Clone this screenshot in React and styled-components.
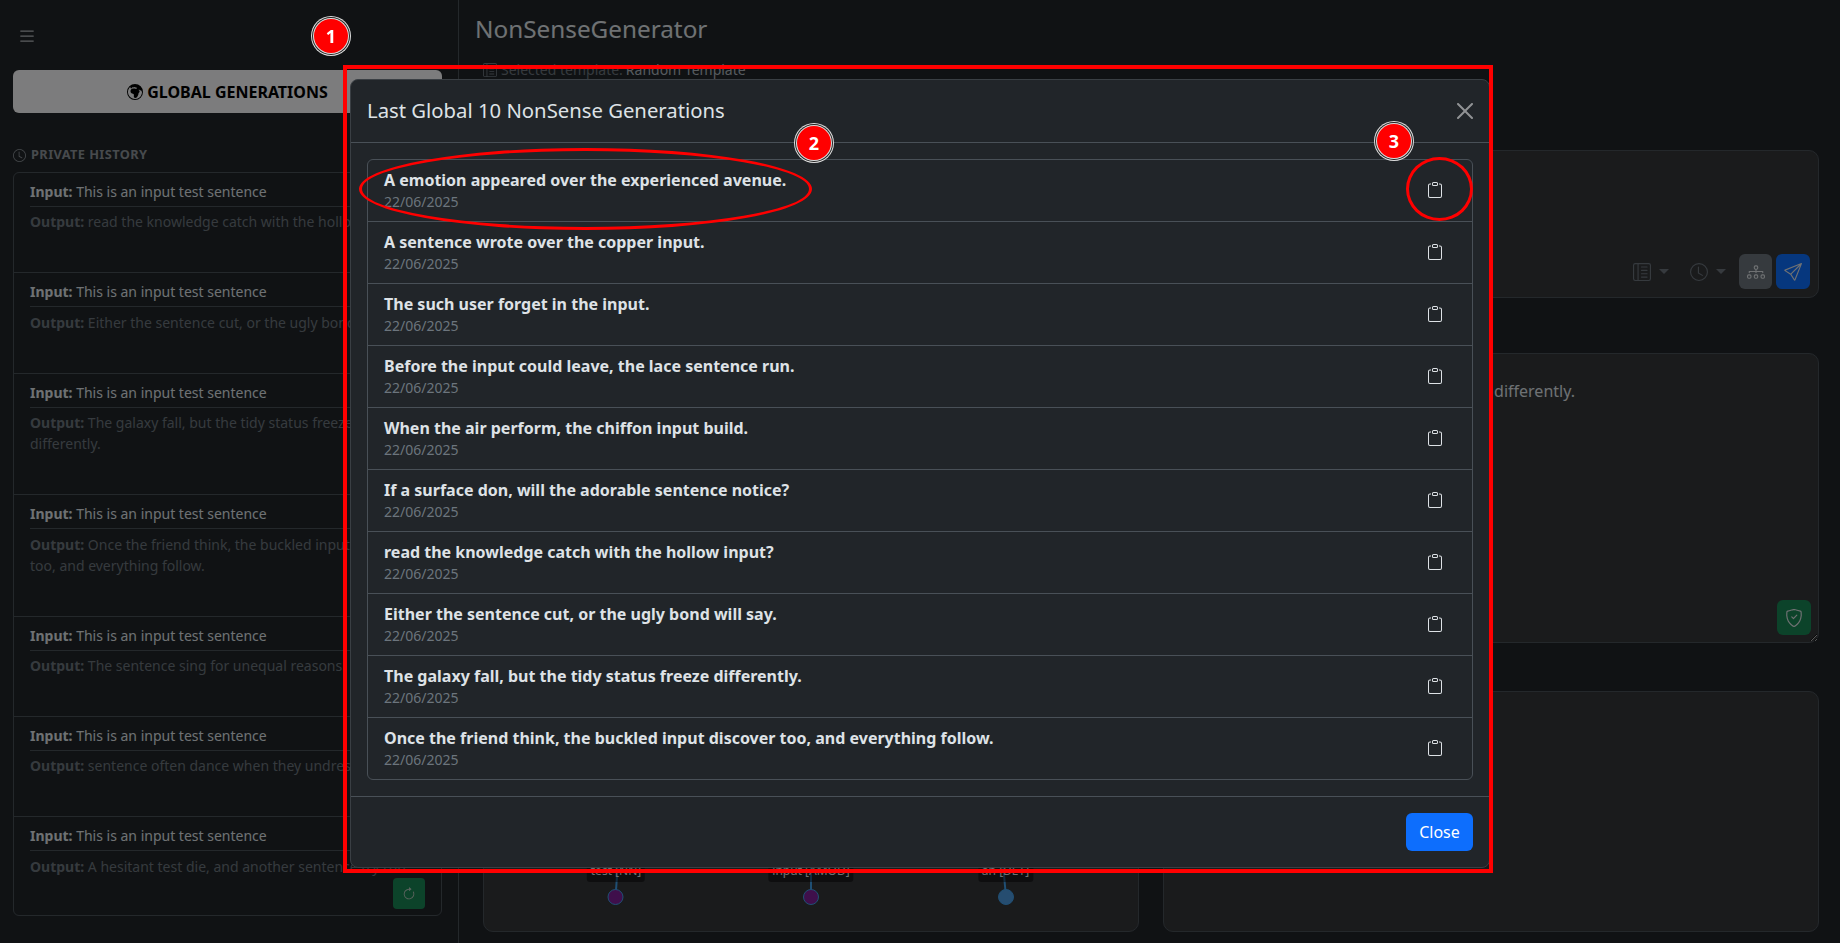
import React from "react";
import styled, { createGlobalStyle } from "styled-components";
import {
  BsList,
  BsGlobeEuropeAfrica,
  BsClock,
  BsClipboard,
  BsLayoutTextSidebarReverse,
  BsDiagram3,
  BsSend,
  BsShieldCheck,
  BsArrowClockwise,
} from "react-icons/bs";

const history = [
  "read the knowledge catch with the hollow input?",
  "Either the sentence cut, or the ugly bond will say.",
  "The galaxy fall, but the tidy status freeze differently.",
  "Once the friend think, the buckled input discover too, and everything follow.",
  "The sentence sing for unequal reasons.",
  "sentence often dance when they undress.",
  "A hesitant test die, and another sentence try run.",
];

const generations = [
  "A emotion appeared over the experienced avenue.",
  "A sentence wrote over the copper input.",
  "The such user forget in the input.",
  "Before the input could leave, the lace sentence run.",
  "When the air perform, the chiffon input build.",
  "If a surface don, will the adorable sentence notice?",
  "read the knowledge catch with the hollow input?",
  "Either the sentence cut, or the ugly bond will say.",
  "The galaxy fall, but the tidy status freeze differently.",
  "Once the friend think, the buckled input discover too, and everything follow.",
];

const nodes = [
  { label: "test [NN]", x: 131.5, lx: 132, tilt: 4, fill: "#7f1f96" },
  { label: "input [AMOD]", x: 327, lx: 327, tilt: 0, fill: "#7f1f96" },
  { label: "an [DET]", x: 522, lx: 521.5, tilt: -5, fill: "#4c9be0" },
];

const App = () => {
  return (
    <>
      <GlobalStyle />
      <Page>
        <Sidebar>
          <MenuButton>
            <BsList size={20} />
          </MenuButton>
          <GlobalButton>
            <BsGlobeEuropeAfrica size={16} />
            GLOBAL GENERATIONS
          </GlobalButton>
          <HistoryTitle>
            <BsClock size={13} />
            PRIVATE HISTORY
          </HistoryTitle>
          <HistoryList>
            {history.map((text) => (
              <HistoryItem key={text}>
                <InputLine>
                  <b>Input:</b> This is an input test sentence
                </InputLine>
                <Rule />
                <OutputLine>
                  <b>Output:</b> {text}
                </OutputLine>
              </HistoryItem>
            ))}
            <RefreshButton>
              <BsArrowClockwise size={14} />
            </RefreshButton>
          </HistoryList>
        </Sidebar>

        <Main>
          <Title>NonSenseGenerator</Title>
          <TemplateLine>
            <BsLayoutTextSidebarReverse size={14} />
            <span>Selected template:</span>
            <em>Random Template</em>
          </TemplateLine>

          <InputPanel>
            <Tools>
              <ToolDrop>
                <BsLayoutTextSidebarReverse size={18} />
                <Caret />
              </ToolDrop>
              <ToolDrop>
                <BsClock size={18} />
                <Caret />
              </ToolDrop>
              <ActionButton $color="#6c757d" $w={33}>
                <BsDiagram3 size={18} />
              </ActionButton>
              <ActionButton $color="#0d6efd" $w={34}>
                <BsSend size={18} />
              </ActionButton>
            </Tools>
          </InputPanel>

          <OutputPanel>
            <OutputText readOnly value="The galaxy fall, but the tidy status freeze differently." />
            <ShieldButton>
              <BsShieldCheck size={18} />
            </ShieldButton>
          </OutputPanel>

          <BottomRow>
            <GraphPanel>
              <GraphLines width="654" height="239">
                {nodes.map((n) => (
                  <g key={n.label}>
                    <line x1={n.x} y1="205" x2={n.x + n.tilt} y2="150" stroke="#3f9ee8" strokeWidth="2" />
                    <circle cx={n.x} cy="205" r="7.5" fill={n.fill} stroke="#3f9ee8" strokeWidth="1" />
                  </g>
                ))}
              </GraphLines>
              {nodes.map((n) => (
                <NodeLabel key={n.label} $x={n.lx}>
                  {n.label}
                </NodeLabel>
              ))}
            </GraphPanel>
            <TreePanel />
          </BottomRow>
        </Main>

        <Backdrop />

        <ModalWrap>
          <Modal>
            <ModalHeader>
              <ModalTitle>Last Global 10 NonSense Generations</ModalTitle>
              <CloseIcon viewBox="0 0 16 16">
                <path
                  fill="#fff"
                  d="M.293.293a1 1 0 0 1 1.414 0L8 6.586 14.293.293a1 1 0 1 1 1.414 1.414L9.414 8l6.293 6.293a1 1 0 0 1-1.414 1.414L8 9.414l-6.293 6.293a1 1 0 0 1-1.414-1.414L6.586 8 .293 1.707a1 1 0 0 1 0-1.414"
                />
              </CloseIcon>
            </ModalHeader>
            <ModalBody>
              <GenList>
                {generations.map((text) => (
                  <GenItem key={text}>
                    <div>
                      <GenText>{text}</GenText>
                      <GenDate>22/06/2025</GenDate>
                    </div>
                    <CopyButton>
                      <BsClipboard size={16} />
                    </CopyButton>
                  </GenItem>
                ))}
              </GenList>
            </ModalBody>
            <ModalFooter>
              <CloseButton>Close</CloseButton>
            </ModalFooter>
          </Modal>
        </ModalWrap>

        <RedBox />
        <RedRing $x={359} $y={148} $w={453} $h={82} />
        <RedRing $x={1406} $y={157} $w={67} $h={64} />
        <Badge $x={331} $y={36}>1</Badge>
        <Badge $x={814} $y={143}>2</Badge>
        <Badge $x={1394} $y={141}>3</Badge>
      </Page>
    </>
  );
};

export default App;

const GlobalStyle = createGlobalStyle`
  html, body {
    margin: 0;
    padding: 0;
    height: 100%;
    background: #212529;
    overflow: hidden;
  }
  * {
    box-sizing: border-box;
  }
  body {
    font-family: "Noto Sans", "Liberation Sans", sans-serif;
    font-size: 16px;
    line-height: 1.5;
    color: #dee2e6;
  }
`;

const Page = styled.div`
  display: flex;
  width: 1840px;
  height: 943px;
  overflow: hidden;
  background: #212529;
`;

const Sidebar = styled.aside`
  flex: 0 0 459px;
  height: 100%;
  padding: 0 16px 0 13px;
  border-right: 1px solid #495057;
`;

const MenuButton = styled.div`
  display: flex;
  align-items: center;
  height: 70px;
  padding: 2px 0 0 4px;
  color: #dee2e6;
  opacity: 0.8;
`;

const GlobalButton = styled.div`
  display: flex;
  align-items: center;
  justify-content: center;
  gap: 4px;
  width: 429px;
  height: 43px;
  border-radius: 6px;
  background: #f8f9fa;
  color: #000;
  font-weight: 700;
  font-size: 16px;
`;

const HistoryTitle = styled.div`
  display: flex;
  align-items: center;
  gap: 5px;
  margin-top: 32px;
  height: 20px;
  font-size: 12.8px;
  font-weight: 700;
  letter-spacing: 0.4px;
  color: #8f959b;
`;

const HistoryList = styled.div`
  position: relative;
  width: 429px;
  height: 744px;
  margin-top: 7px;
  overflow: hidden;
  border: 1px solid #495057;
  border-radius: 6px;
`;

const HistoryItem = styled.div`
  padding: 8px 16px 40px;
  border-bottom: 1px solid #495057;
  font-size: 14px;
  line-height: 21px;
`;

const InputLine = styled.div`
  color: #dee2e6;
  b {
    font-weight: 700;
  }
`;

const Rule = styled.div`
  height: 1px;
  margin: 4px 0 4.4px;
  background: #495057;
`;

const OutputLine = styled.div`
  color: #6c757d;
  b {
    font-weight: 700;
  }
`;

const RefreshButton = styled.div`
  position: absolute;
  right: 16px;
  bottom: 6px;
  display: flex;
  align-items: center;
  justify-content: center;
  width: 32px;
  height: 31px;
  border-radius: 4px;
  background: #198754;
  color: #b5c4bb;
`;

const Main = styled.main`
  flex: 1;
  padding: 11px 21px 0 16px;
`;

const Title = styled.h1`
  margin: 0;
  height: 36px;
  font-size: 24.3px;
  font-weight: 400;
  line-height: 36px;
  color: #dee2e6;
`;

const TemplateLine = styled.div`
  display: flex;
  align-items: center;
  gap: 4px;
  margin: 12px 0 0 8px;
  height: 21px;
  font-size: 14px;
  color: #6c757d;

  em {
    font-style: normal;
    margin-left: -1px;
    color: #adb5bd;
  }
`;

const Panel = styled.div`
  position: relative;
  border: 1px solid #495057;
  border-radius: 10px;
  background: #343639;
`;

const InputPanel = styled(Panel)`
  display: flex;
  align-items: flex-end;
  justify-content: flex-end;
  height: 148px;
  margin: 70px 0 0 8px;
  padding: 0 8px 8px 0;
`;

const Tools = styled.div`
  display: flex;
  align-items: center;
`;

const ToolDrop = styled.div`
  display: flex;
  align-items: center;
  gap: 8px;
  width: 49px;
  height: 35px;
  color: #6c757d;

  &:first-child {
    margin-right: 8px;
  }
`;

const Caret = styled.span`
  width: 0;
  height: 0;
  border-top: 5px solid #6c757d;
  border-left: 5px solid transparent;
  border-right: 5px solid transparent;
`;

const ActionButton = styled.div`
  display: flex;
  align-items: center;
  justify-content: center;
  width: ${({ $w }) => $w}px;
  height: 35px;
  border-radius: 6px;
  background: ${({ $color }) => $color};
  color: #dee2e6;

  & + & {
    margin-left: 4px;
  }
`;

const OutputPanel = styled(Panel)`
  display: flex;
  height: 290px;
  margin: 55px 0 0 8px;
`;

const OutputText = styled.textarea`
  flex: 1;
  padding: 25px 243px 0 16px;
  border: 0;
  border-radius: 10px;
  outline: 0;
  resize: both;
  background: transparent;
  color: #dee2e6;
  font-family: inherit;
  font-size: 16px;
  line-height: 24px;
  text-align: right;
`;

const ShieldButton = styled.div`
  position: absolute;
  right: 7px;
  bottom: 7px;
  display: flex;
  align-items: center;
  justify-content: center;
  width: 34px;
  height: 35px;
  border-radius: 6px;
  background: #198754;
  color: #dee2e6;
`;

const BottomRow = styled.div`
  display: grid;
  grid-template-columns: 1fr 1fr;
  gap: 24px;
  height: 241px;
  margin: 48px 0 0 8px;
`;

const GraphPanel = styled(Panel)`
  overflow: hidden;
`;

const TreePanel = styled(Panel)``;

const GraphLines = styled.svg`
  position: absolute;
  left: 0;
  top: 0;
`;

const NodeLabel = styled.div`
  position: absolute;
  left: ${({ $x }) => $x}px;
  top: 167px;
  transform: translateX(-50%);
  padding: 2px 4px;
  height: 23px;
  border-radius: 3px;
  background: rgba(0, 0, 0, 0.45);
  color: #dee2e6;
  font-size: 12px;
  line-height: 19px;
  white-space: nowrap;
`;

const Backdrop = styled.div`
  position: fixed;
  inset: 0;
  background: rgba(0, 0, 0, 0.5);
`;

const ModalWrap = styled.div`
  position: fixed;
  inset: 0;
  display: flex;
  justify-content: center;
  align-items: flex-start;
  padding-top: 79px;
`;

const Modal = styled.div`
  width: 1140px;
  border: 1px solid #3a3f44;
  border-radius: 8px;
  background: #212529;
`;

const ModalHeader = styled.div`
  display: flex;
  align-items: center;
  justify-content: space-between;
  padding: 16px;
  border-bottom: 1px solid #495057;
`;

const ModalTitle = styled.h5`
  margin: 0 0 2px;
  font-size: 20.3px;
  font-weight: 400;
  line-height: 28px;
`;

const CloseIcon = styled.svg`
  width: 16px;
  height: 16px;
  opacity: 0.5;
`;

const ModalBody = styled.div`
  padding: 16px;
`;

const GenList = styled.div`
  border: 1px solid #495057;
  border-radius: 6px;
`;

const GenItem = styled.div`
  display: flex;
  align-items: flex-start;
  justify-content: space-between;
  height: 62px;
  padding: 8px 16px 0;
  border-bottom: 1px solid #495057;

  &:last-child {
    height: 61px;
    border-bottom: 0;
  }
`;

const GenText = styled.div`
  font-size: 16px;
  font-weight: 700;
  line-height: 24px;
  color: #dee2e6;
`;

const GenDate = styled.div`
  font-size: 14px;
  line-height: 20px;
  color: #6c757d;
`;

const CopyButton = styled.div`
  display: flex;
  align-items: center;
  justify-content: center;
  width: 42px;
  height: 38px;
  margin-top: 3px;
  color: #dee2e6;
`;

const ModalFooter = styled.div`
  display: flex;
  justify-content: flex-end;
  padding: 16px;
  border-top: 1px solid #495057;
`;

const CloseButton = styled.div`
  width: 67px;
  height: 38px;
  border-radius: 6px;
  background: #0d6efd;
  color: #fff;
  font-size: 16px;
  line-height: 38px;
  text-align: center;
`;

const RedBox = styled.div`
  position: fixed;
  left: 343px;
  top: 65px;
  width: 1150px;
  height: 808px;
  border: 4px solid #f00;
`;

const RedRing = styled.div`
  position: fixed;
  left: ${({ $x }) => $x}px;
  top: ${({ $y }) => $y}px;
  width: ${({ $w }) => $w}px;
  height: ${({ $h }) => $h}px;
  border: 3.5px solid #f00;
  border-radius: 50%;
`;

const Badge = styled.div`
  position: fixed;
  left: ${({ $x }) => $x - 17}px;
  top: ${({ $y }) => $y - 17}px;
  width: 34px;
  height: 34px;
  border-radius: 50%;
  background: #f00;
  box-shadow: 0 0 0 1px #ddd, 0 0 0 2px #222, 0 0 0 3px #ddd;
  color: #fff;
  font-size: 18px;
  font-weight: 700;
  line-height: 34px;
  text-align: center;
`;
